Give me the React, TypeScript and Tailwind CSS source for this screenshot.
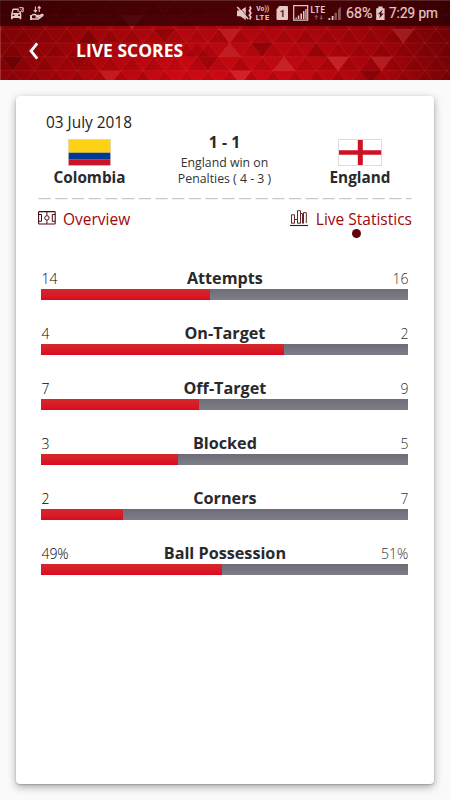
import React from 'react'

interface Stat {
  label: string
  home: string
  away: string
  fill: number
}

const stats: Stat[] = [
  { label: 'Attempts', home: '14', away: '16', fill: 46 },
  { label: 'On-Target', home: '4', away: '2', fill: 66.2 },
  { label: 'Off-Target', home: '7', away: '9', fill: 43 },
  { label: 'Blocked', home: '3', away: '5', fill: 37.1 },
  { label: 'Corners', home: '2', away: '7', fill: 22.1 },
  { label: 'Ball Possession', home: '49%', away: '51%', fill: 49.1 },
]

const TRI_W = 21.7
const TRI_H = 13.85

// a few triangles that stand out from the pattern: [centre x, row, points up, fill]
const accents: [number, number, boolean, string][] = [
  [403.2, 2, false, '#ff777733'],
  [262, 3, false, '#50000066'],
  [338, 4, false, '#ff777740'],
  [381.6, 4, false, '#ff777733'],
  [284, 4, true, '#ff777740'],
  [229.6, 3, true, '#ff777738'],
  [229.6, 2, false, '#ff777730'],
  [240.6, 5, false, '#ff777738'],
  [370.6, 5, false, '#50000060'],
  [316.4, 3, true, '#60000040'],
  [208, 4, false, '#50000050'],
  [164.5, 2, false, '#50000050'],
  [132, 1, false, '#ff777738'],
  [88.6, 2, true, '#50000050'],
  [12.6, 4, false, '#40000066'],
  [110, 5, false, '#ff777730'],
  [77.8, 4, false, '#50000033'],
  [99.4, 3, true, '#60000028'],
  [197, 3, true, '#60000033'],
]

function Pattern() {
  const triangles = []
  for (let row = 0; row < 6; row++) {
    const top = row * TRI_H + 1.4
    const offset = row % 2 ? 1.8 : 12.65
    for (let i = -1; i < 22; i++) {
      const x = i * TRI_W + offset
      // cheap deterministic shade
      const n = (i * 37 + row * 53 + i * i * 11 + 500) % 17
      triangles.push(
        <path
          key={`${row}-${i}`}
          d={`M${x} ${top + TRI_H}L${x + TRI_W / 2} ${top}L${x + TRI_W} ${top + TRI_H}Z`}
          fill="#600000"
          fillOpacity={0.1 + (n % 7) * 0.018}
          stroke="#ff6262"
          strokeOpacity="0.16"
          strokeWidth="0.9"
        />
      )
    }
  }
  return (
    <svg width="450" height="80" className="absolute inset-0">
      <defs>
        <linearGradient id="base">
          <stop offset="0" stopColor="#8a0308" />
          <stop offset="0.2" stopColor="#b3050b" />
          <stop offset="0.4" stopColor="#d10812" />
          <stop offset="0.65" stopColor="#c90812" />
          <stop offset="0.85" stopColor="#ab050b" />
          <stop offset="1" stopColor="#780307" />
        </linearGradient>
        <linearGradient id="shade" x2="0" y2="1">
          <stop offset="0" stopColor="#500" stopOpacity="0.4" />
          <stop offset="1" stopColor="#500" stopOpacity="0" />
        </linearGradient>
      </defs>
      <rect width="450" height="80" fill="url(#base)" />
      <rect width="450" height="80" fill="url(#shade)" />
      {triangles}
      {accents.map(([cx, row, up, fill], i) => {
        const top = row * TRI_H + 1.4
        const near = up ? top + TRI_H : top
        const tip = up ? top : top + TRI_H
        return (
          <path key={i} fill={fill} d={`M${cx - TRI_W / 2} ${near}H${cx + TRI_W / 2}L${cx} ${tip}Z`} />
        )
      })}
      <path d="M.5 0V80" stroke="#ffaaaa" strokeOpacity="0.25" />
    </svg>
  )
}

function StatusBar() {
  return (
    <div className="relative h-[26px] bg-[#240003]/70 text-[#e3c8c9]">
      <div className="absolute inset-x-0 top-0 h-px bg-white/15" />
      <svg width="450" height="26" viewBox="0 0 450 26" fill="currentColor" className="absolute inset-0">
        {/* Car */}
        <path
          fillRule="evenodd"
          d="M13.4 8.5h5.3v2.8h2l.6 3v5h-1.8v-1.4h-6.8v1.4H11v-5l1.3-4.8q.3-1 1.1-1zm.2 1.5-.8 3h6.7l-.5-1.2h-1.5V10zm-1.1 4.6v1.5h1.8v-1.5zm5.6 0v1.5h1.8v-1.5z"
        />
        <path fill="none" stroke="currentColor" d="M19.2 7.7h4v4h-2M20.5 9.5l1 1 1.7-2.3" />
        {/* Data saver hand */}
        <path fill="none" stroke="currentColor" strokeWidth="1.1" d="M35.4 6.5V12m-1.6-1.8 1.6 1.8 1.6-1.8M39.2 12V6.5m-1.6 1.8 1.6-1.8 1.6 1.8" />
        <path d="M30 15h2v5h-2z" />
        <path fill="none" stroke="currentColor" strokeWidth="1.5" d="M32 15.2q2.5-1.7 4.5.3h2.2q.8 1.2-.5 1.5h-2.7m3-.7 3.4-1.8q1.5-.2.9.9L38.3 19H32" />
        {/* Muted */}
        <path d="M237 10.5h3.3L245.8 7v13l-5.5-3.7H237z" />
        <path stroke="#4a1013" strokeWidth=".8" d="m238.8 6.5 9.5 11" />
        <path stroke="currentColor" strokeWidth="1.5" d="m237.2 7 11 12" />
        <path fill="none" stroke="currentColor" strokeWidth="1.7" d="m249.8 6.5 1 2-1.4 2.3 1.5 2.2-1.5 2.2 1.4 2-1 2.3" />
        {/* Sim */}
        <path d="M276.5 9.5 279.3 6H287q1 0 1 1v12q0 1-1 1h-9.5q-1 0-1-1z" />
        {/* First signal */}
        <path fill="none" stroke="currentColor" strokeWidth="1.2" d="M293.7 5.7h14v14.5h-14z" />
        <path d="M295.5 17.5h1.3V19h-1.3zm2.3-2h1.5V19h-1.5zm2.6-2h1.6V19h-1.6zm2.6-2.5h1.5v8H303zm2.3-2h1.3v10h-1.3z" />
        <path fill="none" stroke="#94676a" d="M316.2 19.5v-4m-1.5 1.5 1.5-1.5 1.5 1.5M321.2 15.3v4m-1.5-1.5 1.5 1.5 1.5-1.5" />
        {/* Second signal */}
        <path d="M328.5 18h1.7v2h-1.7zm3.2-2h1.8v4h-1.8z" />
        <path fill="#8a5356" d="M334.5 12.8h2.4V20h-2.4zm3.5-3.3 2.9-3V20H338z" />
        {/* Battery */}
        <path d="M378.3 6.4h4.3v1.8h2V20h-8.4V8.2h2.1z" />
        <path fill="#40070b" d="m382.7 9.8-5 4.4h2.4l-.7 4 4.3-4.8h-2.5z" />
        <g fontFamily="Roboto, sans-serif">
          <text x="256.2" y="11.3" fontSize="6.8" fontWeight="700" textLength="13">Vo))</text>
          <text x="255.7" y="19.7" fontSize="7.6" fontWeight="700" textLength="13.5">LTE</text>
          <text x="279.7" y="17" fontSize="9.5" fontWeight="700" fill="#54151a">1</text>
          <text x="310.5" y="13" fontSize="8.2" fontWeight="700" textLength="14.5">LTE</text>
          <text x="346" y="18" fontSize="14" textLength="26.5" lengthAdjust="spacingAndGlyphs" stroke="currentColor" strokeWidth=".2">68%</text>
          <text x="389" y="18" fontSize="14" textLength="49" lengthAdjust="spacingAndGlyphs" stroke="currentColor" strokeWidth=".2">7:29 pm</text>
        </g>
      </svg>
    </div>
  )
}

function PitchIcon() {
  return (
    <svg width="18" height="14" viewBox="0 0 18 14" fill="none" stroke="#4b0b0e">
      <rect x=".6" y=".6" width="16.6" height="12.4" rx=".8" strokeWidth="1.1" />
      <path d="M.8 3.5h2.7v6.8H.8M17 3.5h-2.7v6.8H17M8.9.8v3.7m0 4.8v3.5" />
      <circle cx="8.9" cy="6.9" r="2.2" />
    </svg>
  )
}

function ChartIcon() {
  return (
    <svg width="18" height="17" viewBox="0 0 18 17" fill="none" stroke="#65262a">
      <path d="M1.5 13.2V4.8h3v8.4M4.5 9.5h3M7.5 13.2V.7h3v12.5M10.5 3.5h2v9.7M13.5 13.2V2.6h2.8v10.6M1.3 13.2h3.4m2.6 0h3.4m1.6 0h1.3" />
      <path d="M0 15.5h18" stroke="#5a0b0f" strokeWidth="1.1" />
    </svg>
  )
}

function StatRow({ label, home, away, fill }: Stat) {
  return (
    <div className="h-[55px]">
      <div className="flex h-[21px] items-center justify-between leading-[21px]">
        <span className="w-16 text-[14px] font-light text-black">{home}</span>
        <span className="text-[16.2px] font-bold text-[#29292b]">{label}</span>
        <span className="w-16 text-right text-[14px] font-light text-[#333]">{away}</span>
      </div>
      <div className="h-[11px] bg-linear-to-b from-[#6d6c77] to-[#7f7e88]">
        <div
          className="h-full bg-linear-to-b from-[#d5282b] to-[#da0724]"
          style={{ width: `${fill}%` }}
        />
      </div>
    </div>
  )
}

export default function App() {
  return (
    <div className="h-[800px] w-[450px] overflow-hidden bg-[#fafafa] font-['Open_Sans',sans-serif]">
      <header className="relative h-20 overflow-hidden">
        <Pattern />
        <StatusBar />
        <div className="relative flex h-[54px] items-center pl-7">
          <svg width="12" height="18" viewBox="0 0 12 18" fill="none" stroke="white" strokeWidth="2.8" className="-mt-1">
            <path d="M9.2 1.3 3 9l6.2 7.7" />
          </svg>
          <h1 className="-mt-1.5 ml-9 text-[17.5px] font-bold leading-6 text-white">LIVE SCORES</h1>
        </div>
      </header>

      <main className="mx-4 mt-4 h-[688px] rounded-[4px] bg-white px-[22px] pt-4 shadow-[0_3px_9px_rgba(0,0,0,0.32),0_1px_2px_rgba(0,0,0,0.2)]">
        <div className="h-[21px] pl-2 text-[15.4px] leading-[21px] text-[#222]">03 July 2018</div>
        <section className="flex h-[65px] justify-between">
          <div className="flex w-[103px] flex-col items-center pt-1.5">
            <svg width="43" height="27" viewBox="0 0 43 27">
              <path fill="#ddd" d="M0 0h43v27H0z" />
              <path fill="#fdd116" d="M.7.7h41.6v13.1H.7z" />
              <path fill="#003893" d="M.7 13.8h41.6v6.6H.7z" />
              <path fill="#ce1126" d="M.7 20.4h41.6v5.9H.7z" />
            </svg>
            <div className="mt-px text-[15.3px] font-bold leading-5 text-[#29292b]">Colombia</div>
          </div>
          <div className="w-[120px] text-center">
            <div className="text-[15.8px] font-bold leading-[19px] text-[#29292b]">1 - 1</div>
            <div className="mt-[3px] text-[12.3px] leading-4 text-[#333]">England win on<br />Penalties ( 4 - 3 )</div>
          </div>
          <div className="flex w-[104px] flex-col items-center pt-1.5">
            <svg width="44" height="27" viewBox="0 0 44 27">
              <path fill="white" stroke="#ddd" d="M.5.5h43v26H.5z" />
              <path fill="#ce1124" d="M1 11.2h18.8V1h5v10.2h18.4v4.6H24.8V26h-5V15.8H1z" />
            </svg>
            <div className="mt-px text-[15.3px] font-bold leading-5 text-[#29292b]">England</div>
          </div>
        </section>
        <svg width="374" height="2" className="block">
          <path d="M.5 .7H373.5" stroke="#bcbcbc" strokeWidth="1" strokeDasharray="12.3 4.4" />
        </svg>
        <nav className="relative flex h-[42px] justify-between pt-2 text-[15.5px] leading-[22px] text-[#a0060c]">
          <div className="flex gap-[7px]">
            <div className="pt-[3px]"><PitchIcon /></div>
            <span>Overview</span>
          </div>
          <div className="flex gap-2">
            <div className="pt-0.5"><ChartIcon /></div>
            <span>Live Statistics</span>
          </div>
          <span className="absolute left-[313.5px] top-[29px] size-[9px] rounded-full bg-[#62040a]" />
        </nav>
        <section className="ml-[3.4px] mr-[3.6px] mt-[26px]">
          {stats.map(s => <StatRow key={s.label} {...s} />)}
        </section>
      </main>
    </div>
  )
}
